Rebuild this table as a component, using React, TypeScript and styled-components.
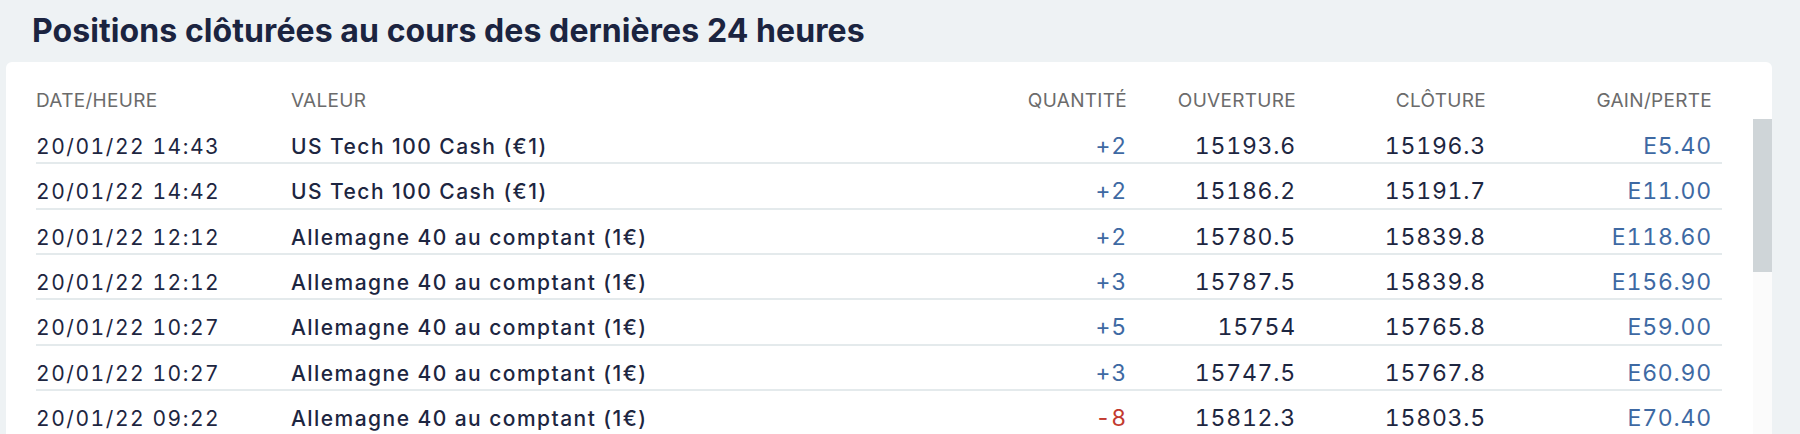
import React from "react";
import styled, { createGlobalStyle } from "styled-components";

const GlobalStyle = createGlobalStyle`
  html, body {
    margin: 0;
    padding: 0;
    background: #eef2f4;
  }
  body {
    font-family: Inter, "Liberation Sans", sans-serif;
    overflow: hidden;
  }
`;

const Page = styled.div`
  width: 1800px;
  height: 434px;
  box-sizing: border-box;
  padding: 0 28px 0 6px;
  overflow: hidden;
`;

const Title = styled.h1`
  margin: 0;
  padding: 11px 0 0 26px;
  height: 62px;
  box-sizing: border-box;
  font-family: Inter, "Liberation Sans", sans-serif;
  font-size: 32px;
  line-height: 40px;
  font-weight: 700;
  color: #1b2440;
  letter-spacing: 0.08px;
`;

const Card = styled.section`
  background: #ffffff;
  border-radius: 6px 6px 0 0;
  padding-left: 30px;
  height: 400px;
`;

const Grid = styled.div`
  display: grid;
  grid-template-columns: 255px 1fr 137px 169px 190px 226px;
  align-items: baseline;
`;

const HeaderRow = styled(Grid)`
  margin-right: 50px;
  padding: 27px 0 7px;
`;

const HeadCell = styled.div<{ $right?: boolean }>`
  font-family: Inter, "Liberation Sans", sans-serif;
  font-size: 19px;
  line-height: 23px;
  font-weight: 400;
  color: #6b6b6b;
  text-align: ${(p) => (p.$right ? "right" : "left")};
  padding-right: ${(p) => (p.$right ? "10px" : "0")};
  letter-spacing: 0.3px;
`;

const Body = styled.div`
  display: flex;
  align-items: flex-start;
  gap: 31px;
`;

const Rows = styled.div`
  flex: 1;
`;

const Row = styled(Grid)`
  height: 45.33px;
  box-sizing: border-box;
  padding-top: 15px;
  border-bottom: 2px solid #e4eaec;
`;

const DateCell = styled.div`
  font-family: Inter, "Liberation Sans", sans-serif;
  font-size: 21px;
  line-height: 24px;
  font-weight: 400;
  color: #1d2641;
  white-space: nowrap;
  font-variant-numeric: tabular-nums;
  letter-spacing: 1.55px;
`;

const NameCell = styled.div`
  font-family: Inter, "Liberation Sans", sans-serif;
  font-size: 21px;
  line-height: 24px;
  font-weight: 500;
  color: #1d2641;
  white-space: nowrap;
  letter-spacing: 1.45px;
`;

const NumCell = styled.div<{ $tone?: "dark" | "blue" | "red" }>`
  font-family: Inter, "Liberation Sans", sans-serif;
  font-size: 23px;
  line-height: 24px;
  font-weight: 400;
  text-align: right;
  padding-right: 10px;
  white-space: nowrap;
  font-variant-numeric: tabular-nums;
  letter-spacing: 0.8px;
  color: ${(p) =>
    p.$tone === "blue" ? "#3e69a3" : p.$tone === "red" ? "#c23a2f" : "#1d2641"};
`;

const Rail = styled.div`
  width: 19px;
  height: 340px;
  background: #fbfbfb;
`;

const Thumb = styled.div`
  height: 153px;
  background: #cfd5d8;
`;

type Trade = {
  date: string;
  name: string;
  qty: string;
  open: string;
  close: string;
  pl: string;
};

const trades: Trade[] = [
  { date: "20/01/22 14:43", name: "US Tech 100 Cash (€1)", qty: "+2", open: "15193.6", close: "15196.3", pl: "E5.40" },
  { date: "20/01/22 14:42", name: "US Tech 100 Cash (€1)", qty: "+2", open: "15186.2", close: "15191.7", pl: "E11.00" },
  { date: "20/01/22 12:12", name: "Allemagne 40 au comptant (1€)", qty: "+2", open: "15780.5", close: "15839.8", pl: "E118.60" },
  { date: "20/01/22 12:12", name: "Allemagne 40 au comptant (1€)", qty: "+3", open: "15787.5", close: "15839.8", pl: "E156.90" },
  { date: "20/01/22 10:27", name: "Allemagne 40 au comptant (1€)", qty: "+5", open: "15754", close: "15765.8", pl: "E59.00" },
  { date: "20/01/22 10:27", name: "Allemagne 40 au comptant (1€)", qty: "+3", open: "15747.5", close: "15767.8", pl: "E60.90" },
  { date: "20/01/22 09:22", name: "Allemagne 40 au comptant (1€)", qty: "-8", open: "15812.3", close: "15803.5", pl: "E70.40" },
];

export default function App() {
  return (
    <>
      <GlobalStyle />
      <Page>
        <Title>Positions clôturées au cours des dernières 24 heures</Title>
        <Card>
          <HeaderRow>
            <HeadCell>DATE/HEURE</HeadCell>
            <HeadCell>VALEUR</HeadCell>
            <HeadCell $right>QUANTITÉ</HeadCell>
            <HeadCell $right>OUVERTURE</HeadCell>
            <HeadCell $right>CLÔTURE</HeadCell>
            <HeadCell $right>GAIN/PERTE</HeadCell>
          </HeaderRow>
          <Body>
            <Rows>
              {trades.map((t, i) => (
                <Row key={i}>
                  <DateCell>{t.date}</DateCell>
                  <NameCell>{t.name}</NameCell>
                  <NumCell $tone={t.qty.startsWith("-") ? "red" : "blue"}>{t.qty}</NumCell>
                  <NumCell>{t.open}</NumCell>
                  <NumCell>{t.close}</NumCell>
                  <NumCell $tone="blue">{t.pl}</NumCell>
                </Row>
              ))}
            </Rows>
            <Rail>
              <Thumb />
            </Rail>
          </Body>
        </Card>
      </Page>
    </>
  );
}
